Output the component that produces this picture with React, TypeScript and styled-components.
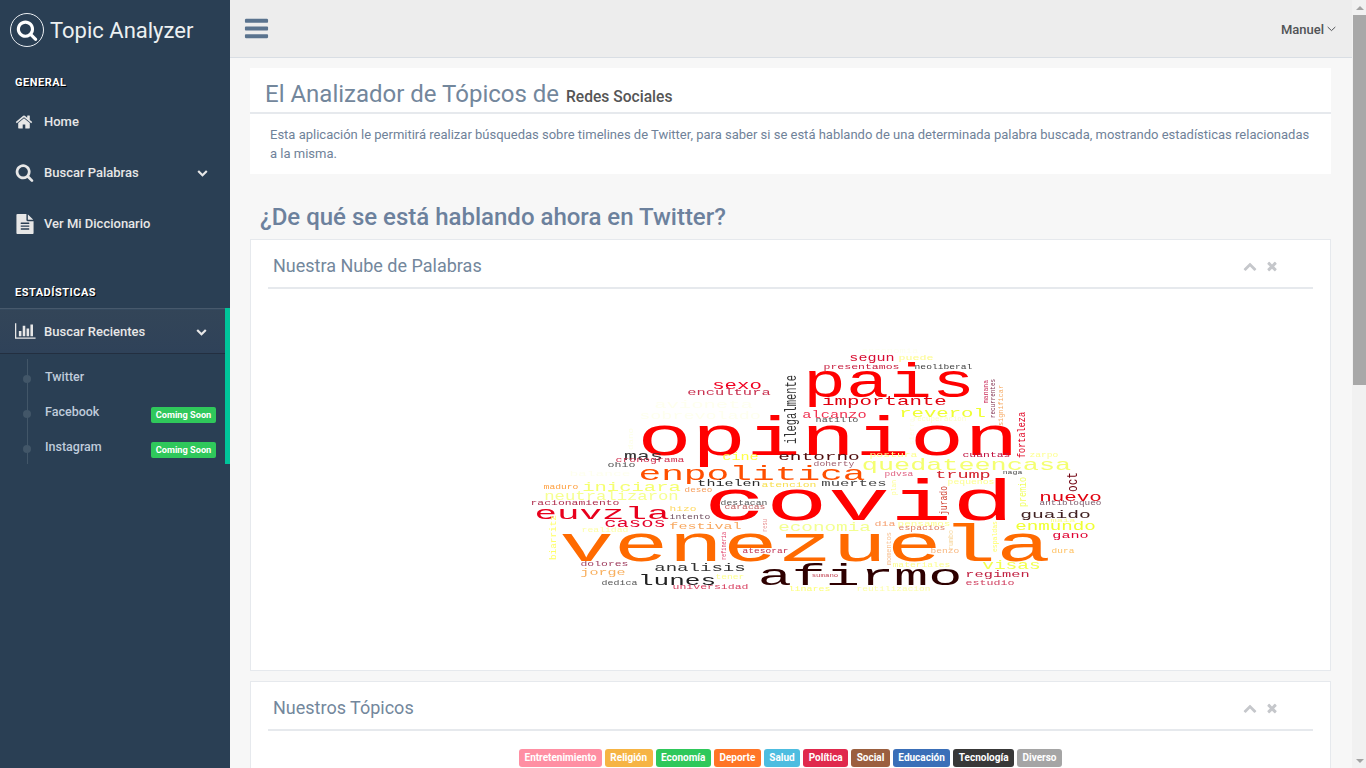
import React from "react";
import styled, { createGlobalStyle } from "styled-components";

const Global = createGlobalStyle`
  html, body { margin: 0; padding: 0; background: #2a3f54; }
  body { font-family: Roboto, "Liberation Sans", sans-serif; font-size: 13px; color: #73879c; }
  * { box-sizing: border-box; }
`;

const Shell = styled.div`
  display: grid;
  grid-template-columns: 230px 1fr 14px;
  min-height: 1530px;
`;
const Sidebar = styled.aside`
  background: #2a3f54;
  display: flex;
  flex-direction: column;
`;
const Brand = styled.div`
  height: 57px;
  display: flex;
  align-items: center;
  gap: 6px;
  padding: 3px 0 0 10px;
  color: #ecf0f1;
  font-size: 22px;
`;
const BrandCircle = styled.span`
  width: 34px;
  height: 34px;
  border-radius: 50%;
  border: 1px solid #eaeef2;
  display: flex;
  align-items: center;
  justify-content: center;
  color: #fff;
`;
const SectionTitle = styled.h3<{ $top: number }>`
  margin: ${(p) => p.$top}px 0 0;
  padding-left: 15px;
  height: 16px;
  line-height: 16px;
  font-size: 11px;
  font-weight: 700;
  letter-spacing: 0.5px;
  color: #fff;
  text-shadow: 1px 1px #000;
`;
const NavList = styled.nav`
  display: flex;
  flex-direction: column;
  margin-top: 5px;
`;
const NavRow = styled.div`
  height: 51px;
  padding: 0 22px 0 15px;
  display: flex;
  align-items: center;
  color: #e7e7e7;
  font-weight: 500;
  font-size: 13px;
`;
const NavIconBox = styled.span`
  width: 29px;
  flex: none;
  display: flex;
  align-items: center;
  color: #e7e7e7;
`;
const NavLabel = styled.span`
  flex: 1;
`;
const ActiveGroup = styled.div`
  margin-top: 7px;
  border-right: 5px solid #00c49a;
  height: 156px;
  display: flex;
  flex-direction: column;
`;
const ActiveRow = styled.div`
  height: 46px;
  flex: none;
  padding: 0 18px 0 15px;
  display: flex;
  align-items: center;
  font-weight: 500;
  color: #e7e7e7;
  background: linear-gradient(#334558, #2f4259);
  border-top: 1px solid #47596c;
  border-bottom: 1px solid #232f40;
  box-shadow: inset 0 1px 0 #34495e;
`;
const SubList = styled.div`
  position: relative;
  flex: 1;
  padding-top: 5px;
  &::before {
    content: "";
    position: absolute;
    left: 27px;
    top: 5px;
    bottom: 0;
    width: 1px;
    background: #425668;
  }
`;
const SubRow = styled.div`
  position: relative;
  height: 35px;
  padding: 0 9px 0 45px;
  display: flex;
  align-items: center;
  justify-content: space-between;
  color: #bfcbdb;
  font-weight: 500;
  font-size: 12.5px;
  &::before {
    content: "";
    position: absolute;
    left: 23px;
    top: 16px;
    width: 8px;
    height: 8px;
    border-radius: 50%;
    background: #425668;
  }
`;
const Soon = styled.span`
  width: 65px;
  height: 16px;
  margin-top: 7px;
  border-radius: 2px;
  background: #2fc85b;
  color: #fff;
  font-size: 9.2px;
  font-weight: 700;
  line-height: 16px;
  text-align: center;
`;

const Main = styled.main`
  background: #f7f7f7;
  min-width: 0;
`;
const TopBar = styled.header`
  height: 58px;
  background: #ededed;
  border-bottom: 1px solid #d9dee4;
  display: flex;
  align-items: center;
  justify-content: space-between;
  padding: 0 16px 0 13px;
  color: #5a738e;
`;
const UserMenu = styled.div`
  display: flex;
  align-items: center;
  gap: 3px;
  color: #515356;
  font-weight: 500;
  font-size: 13px;
  margin-top: 1px;
`;
const Content = styled.div`
  padding: 10px 21px 0 20px;
  display: flex;
  flex-direction: column;
`;
const IntroCard = styled.section`
  background: #fff;
  height: 106px;
`;
const IntroTitle = styled.div`
  height: 46px;
  border-bottom: 2px solid #e6e9ed;
  padding: 8px 15px 0;
  font-size: 24px;
  line-height: 36px;
  color: #73879c;
`;
const IntroSmall = styled.small`
  font-size: 15.6px;
  font-weight: 500;
  color: #555;
  margin-left: 1px;
`;
const IntroText = styled.p`
  margin: 0;
  padding: 11px 20px 0;
  font-size: 13px;
  line-height: 19px;
  color: #6f8299;
`;
const Heading = styled.h2`
  margin: 29px 0 0 10px;
  height: 36px;
  font-size: 24px;
  line-height: 29px;
  font-weight: 500;
  color: #6c819d;
`;
const Panel = styled.section<{ $height?: number }>`
  background: #fff;
  border: 1px solid #e6e9ed;
  padding: 0 17px;
  margin-bottom: 10px;
  height: ${(p) => (p.$height ? `${p.$height}px` : "auto")};
`;
const PanelHead = styled.div`
  height: 49px;
  border-bottom: 2px solid #e6e9ed;
  display: flex;
  align-items: center;
  justify-content: space-between;
  padding: 3px 34px 0 5px;
  font-size: 18px;
  color: #73879c;
`;
const PanelTools = styled.div`
  display: flex;
  align-items: center;
  gap: 8px;
  margin-top: 1px;
  color: #c5c7cb;
`;
const CloudBox = styled.div`
  margin: 0 -17px;
  height: 381px;
`;
const BadgeRow = styled.div`
  display: flex;
  justify-content: center;
  gap: 3px;
  padding-top: 18px;
  height: 762px;
`;
const Badge = styled.span<{ $bg: string }>`
  height: 18px;
  padding: 0 5.5px;
  border-radius: 3px;
  background: ${(p) => p.$bg};
  color: #fff;
  font-size: 10px;
  font-weight: 700;
  line-height: 18px;
`;
const ScrollRail = styled.div`
  position: sticky;
  top: 0;
  height: 100vh;
  background: #f1f1f1;
  padding-left: 1px;
  display: flex;
  flex-direction: column;
`;
const RailArrow = styled.div<{ $down?: boolean }>`
  height: 15px;
  flex: none;
  display: flex;
  align-items: center;
  justify-content: center;
  &::before {
    content: "";
    border-left: 4px solid transparent;
    border-right: 4px solid transparent;
    ${(p) => (p.$down ? "border-top" : "border-bottom")}: 4px solid #a3a3a3;
  }
`;
const RailThumb = styled.div`
  height: 370px;
  flex: none;
  background: #a8a8a8;
`;
const RailSpace = styled.div`
  flex: 1;
`;

const FA = {
  home: "M1472 992v480q0 26-19 45t-45 19h-384v-384h-256v384h-384q-26 0-45-19t-19-45v-480q0-1 .5-3t.5-3l575-474 575 474q1 2 1 6zm223-69l-62 74q-8 9-21 11h-3q-13 0-21-7l-692-577-692 577q-12 8-24 7-13-2-21-11l-62-74q-8-10-7-23.5t11-21.5l719-599q32-26 76-26t76 26l244 204v-195q0-14 9-23t23-9h192q14 0 23 9t9 23v408l219 182q10 8 11 21.5t-7 23.5z",
  search: "M1216 832q0-185-131.500-316.500t-316.500-131.500-316.500 131.500-131.500 316.500 131.500 316.500 316.500 131.500 316.500-131.500 131.500-316.500zm512 832q0 52-38 90t-90 38q-54 0-90-38l-343-342q-179 124-399 124-143 0-273.500-55.500t-225-150-150-225-55.500-273.500 55.500-273.500 150-225 225-150 273.500-55.500 273.500 55.500 225 150 150 225 55.500 273.500q0 220-124 399l343 343q37 37 37 90z",
  file: "M1596 476q14 14 28 36h-472v-472q22 14 36 28zm-476 164h544v1056q0 40-28 68t-68 28h-1344q-40 0-68-28t-28-68v-1600q0-40 28-68t68-28h800v544q0 40 28 68t68 28zm160 736v-64q0-14-9-23t-23-9h-704q-14 0-23 9t-9 23v64q0 14 9 23t23 9h704q14 0 23-9t9-23zm0-256v-64q0-14-9-23t-23-9h-704q-14 0-23 9t-9 23v64q0 14 9 23t23 9h704q14 0 23-9t9-23zm0-256v-64q0-14-9-23t-23-9h-704q-14 0-23 9t-9 23v64q0 14 9 23t23 9h704q14 0 23-9t9-23z",
  bars: "M1664 1344v128q0 26-19 45t-45 19h-1408q-26 0-45-19t-19-45v-128q0-26 19-45t45-19h1408q26 0 45 19t19 45zm0-512v128q0 26-19 45t-45 19h-1408q-26 0-45-19t-19-45v-128q0-26 19-45t45-19h1408q26 0 45 19t19 45zm0-512v128q0 26-19 45t-45 19h-1408q-26 0-45-19t-19-45v-128q0-26 19-45t45-19h1408q26 0 45 19t19 45z",
  chart: "M640 896v512h-256v-512h256zm384-512v1024h-256v-1024h256zm1024 1152v128h-2048v-1536h128v1408h1920zm-640-896v768h-256v-768h256zm384-384v1152h-256v-1152h256z",
  down: "M1683 808l-742 741q-19 19-45 19t-45-19l-742-741q-19-19-19-45.500t19-45.500l166-166q19-19 45-19t45 19l531 531 531-531q19-19 45-19t45 19l166 166q19 19 19 45.500t-19 45.500z",
  up: "M1683 1331l-166 165q-19 19-45 19t-45-19l-531-531-531 531q-19 19-45 19t-45-19l-166-165q-19-19-19-45.500t19-45.500l742-741q19-19 45-19t45 19l742 741q19 19 19 45.500t-19 45.500z",
  close: "M1490 1322q0 40-28 68l-136 136q-28 28-68 28t-68-28l-294-294-294 294q-28 28-68 28t-68-28l-136-136q-28-28-28-68t28-68l294-294-294-294q-28-28-28-68t28-68l136-136q28-28 68-28t68 28l294 294 294-294q28-28 68-28t68 28l136 136q28 28 28 68t-28 68l-294 294 294 294q28 28 28 68z",
};

const Icon = ({ d, size, vw = 1792 }: { d: string; size: number; vw?: number }) => (
  <svg width={(size * vw) / 1792} height={size} viewBox={`0 0 ${vw} 1792`} fill="currentColor">
    <path d={d} />
  </svg>
);
const Angle = () => (
  <svg width="9" height="6" viewBox="0 0 9 6" fill="none" stroke="#515356" strokeWidth="1">
    <path d="M.7 1l3.8 3.6L8.300 1" />
  </svg>
);

// word, x1, x2, baseline, font size, colour
type W = [string, number, number, number, number, string];
const WORDS: W[] = [
  ["enconomia", 862, 918, 353, 7, "#fdfff0"],
  ["segun", 850, 894, 361, 10, "#d81030"],
  ["puede", 899, 933, 360, 8, "#fdfb8c"],
  ["presentamos", 824, 899, 369, 8, "#c82040"],
  ["neoliberal", 915, 972, 369, 8, "#444444"],
  ["pais", 806, 972, 397, 48, "#ff0000"],
  ["importante", 823, 946, 405, 13, "#e00010"],
  ["sexo", 713, 761, 389, 13, "#f00020"],
  ["encultura", 688, 770, 395, 9, "#c8304f"],
  ["avioneta", 655, 752, 408, 10, "#feffee"],
  ["sobrevolado", 640, 760, 419, 10, "#feffee"],
  ["alcanzo", 803, 866, 418, 11, "#f03050"],
  ["reverol", 900, 985, 417, 13, "#f0ff33"],
  ["natillo", 816, 858, 422, 7.5, "#555555"],
  ["recuperacion", 913, 966, 421, 7, "#fdffc8"],
  ["opinion", 641, 1015, 455, 56, "#ff0000"],
  ["mas", 625, 662, 460, 13, "#333333"],
  ["cine", 723, 758, 460, 10, "#ffff44"],
  ["entorno", 779, 859, 460, 11.500, "#501010"],
  ["postura", 870, 917, 457, 7.5, "#fdff90"],
  ["cuantas", 963, 1010, 457, 7.5, "#c0103e"],
  ["zarpo", 1030, 1058, 457, 7.5, "#fdff90"],
  ["cronograma", 616, 684, 462, 8, "#d03050"],
  ["ohio", 608, 635, 467, 7, "#555555"],
  ["doherty", 814, 854, 466, 7, "#a06070"],
  ["quedateencasa", 863, 1070, 470, 17, "#f4ff70"],
  ["enpolitica", 640, 864, 480, 21, "#ff5000"],
  ["balance", 570, 630, 476, 8, "#feffee"],
  ["pdvsa", 885, 913, 476, 7.5, "#e06080"],
  ["naga", 1003, 1022, 474, 6, "#444444"],
  ["trump", 936, 990, 478, 11, "#d2202c"],
  ["pequenos", 948, 994, 484, 7.5, "#fdff90"],
  ["thielen", 698, 760, 486, 9, "#2a2a2a"],
  ["atencion", 762, 816, 487, 8, "#f8e050"],
  ["muertes", 822, 886, 486, 9, "#444444"],
  ["maduro", 544, 578, 489, 7.5, "#ffa040"],
  ["iniciara", 583, 680, 491, 13, "#f5ff70"],
  ["deseo", 685, 712, 492, 7.5, "#f6a060"],
  ["neutralizaron", 545, 678, 500, 13, "#f6ff90"],
  ["nuevo", 1040, 1101, 501, 13, "#e00010"],
  ["racionamiento", 531, 619, 505, 7.5, "#b03050"],
  ["destacan", 721, 767, 505, 7.5, "#555555"],
  ["antibloqueo", 1040, 1101, 505, 7.5, "#806070"],
  ["caracas", 725, 765, 509, 7, "#c06060"],
  ["hizo", 670, 696, 511, 7.5, "#ffd860"],
  ["euvzla", 536, 668, 519, 19, "#e8001e"],
  ["guaido", 1021, 1090, 518, 11, "#402020"],
  ["intento", 670, 710, 519, 7, "#705060"],
  ["covid", 708, 1010, 520, 57, "#ff0000"],
  ["maia", 1051, 1075, 522, 6, "#fdff90"],
  ["casos", 605, 665, 527, 13, "#e5002a"],
  ["dia", 875, 895, 526, 7, "#f6a070"],
  ["pensamos", 898, 950, 526, 8, "#fdff90"],
  ["festival", 670, 741, 529, 9.5, "#f8a860"],
  ["espacios", 899, 945, 530, 7, "#e08060"],
  ["enmundo", 1016, 1095, 530, 12, "#f0ff30"],
  ["realidad", 582, 628, 532, 7.5, "#fdffa8"],
  ["economia", 779, 870, 531, 13, "#f3ff90"],
  ["gano", 1053, 1088, 538, 9, "#e00030"],
  ["benzo", 931, 959, 553, 7, "#f8b880"],
  ["atesorar", 743, 788, 553, 7.5, "#c03050"],
  ["dura", 1052, 1074, 553, 7.5, "#ffc060"],
  ["venezuela", 563, 1047, 561, 52, "#ff6a00"],
  ["materiales", 893, 950, 567, 7.5, "#fdff90"],
  ["dolores", 581, 628, 566, 8, "#a04060"],
  ["analisis", 655, 745, 571, 10.5, "#333333"],
  ["visas", 983, 1040, 569, 13, "#f2ff50"],
  ["jorge", 581, 625, 575, 9.5, "#f8b060"],
  ["tener", 716, 744, 579, 7.5, "#fdff90"],
  ["sumano", 812, 838, 577, 6, "#c04050"],
  ["regimen", 966, 1029, 577, 9.5, "#c02040"],
  ["afirmo", 760, 960, 585, 30, "#2d0005"],
  ["lunes", 639, 715, 585, 14, "#222222"],
  ["dedica", 602, 637, 585, 7.5, "#555555"],
  ["estudio", 966, 1014, 585, 7.5, "#d04060"],
  ["universidad", 673, 748, 589, 8, "#d84060"],
  ["linares", 789, 830, 591, 7.5, "#fdff78"],
  ["reutilizacion", 857, 930, 591, 7.5, "#fdffa8"],
];
// word, baseline x, y1 (top), y2 (bottom), size, colour : read bottom to top
type V = [string, number, number, number, number, string];
const VERTICAL: V[] = [
  ["ilegalmente", 796, 375, 444, 16, "#333333"],
  ["manana", 988, 380, 403, 8, "#c82050"],
  ["recurrentes", 995, 379, 418, 8, "#803050"],
  ["significar", 1003, 385, 426, 8, "#f6a860"],
  ["fortaleza", 1025, 412, 458, 10, "#e00020"],
  ["dano", 633, 428, 450, 7, "#fdffe8"],
  ["sierra", 914, 418, 445, 7, "#fdffe8"],
  ["oct", 1077, 472, 492, 14, "#700010"],
  ["premio", 1026, 477, 507, 10, "#f0ff60"],
  ["plan", 896, 480, 495, 8, "#fdff90"],
  ["jurado", 947, 486, 515, 10, "#d04030"],
  ["biarritz", 556, 515, 560, 9, "#ffff66"],
  ["resu", 767, 519, 532, 7, "#e89090"],
  ["refineria", 726, 532, 560, 7, "#e0406a"],
  ["espaldas", 997, 521, 552, 8, "#ffff66"],
  ["momentos", 891, 532, 565, 7, "#f8c090"],
  ["rumbo", 953, 530, 550, 7, "#f8d8a0"],
];
const mono = '"Liberation Mono", "DejaVu Sans Mono", monospace';
const BEARING = 0.07;

const WordCloud = () => (
  <svg width="1079" height="381" viewBox="251 289 1079 381" style={{ display: "block" }}>
    <defs>
      <filter id="soft" x="-5%" y="-5%" width="110%" height="110%">
        <feGaussianBlur stdDeviation="0.35" />
      </filter>
    </defs>
    <g filter="url(#soft)" fontFamily={mono}>
      {WORDS.map(([t, x1, x2, y, fs, c]) => {
        const pad = ((x2 - x1) / t.length) * BEARING;
        return (
          <text
            key={t}
            x={x1 - pad}
            y={y}
            fontSize={fs}
            fill={c}
            textLength={x2 - x1 + 2 * pad}
            lengthAdjust="spacingAndGlyphs"
          >
            {t}
          </text>
        );
      })}
      {VERTICAL.map(([t, x, y1, y2, fs, c]) => (
        <text
          key={t}
          transform={`translate(${x} ${y2}) rotate(-90)`}
          fontSize={fs}
          fill={c}
          textLength={y2 - y1}
          lengthAdjust="spacingAndGlyphs"
        >
          {t}
        </text>
      ))}
    </g>
  </svg>
);

const TOPICS: [string, string][] = [
  ["Entretenimiento", "#ff8fa3"],
  ["Religión", "#f6b444"],
  ["Economía", "#2fc85b"],
  ["Deporte", "#ff7527"],
  ["Salud", "#4dbde0"],
  ["Política", "#e0294d"],
  ["Social", "#9b5f3f"],
  ["Educación", "#3a6fb8"],
  ["Tecnología", "#383838"],
  ["Diverso", "#a5a5a5"],
];

const PanelTitle = ({ title }: { title: string }) => (
  <PanelHead>
    <span>{title}</span>
    <PanelTools>
      <Icon d={FA.up} size={14} />
      <Icon d={FA.close} size={14} />
    </PanelTools>
  </PanelHead>
);

export default function App() {
  return (
    <>
      <Global />
      <Shell>
        <Sidebar>
          <Brand>
            <BrandCircle>
              <Icon d={FA.search} size={22} />
            </BrandCircle>
            <span>Topic Analyzer</span>
          </Brand>
          <SectionTitle $top={18}>GENERAL</SectionTitle>
          <NavList>
            <NavRow>
              <NavIconBox><Icon d={FA.home} size={18} /></NavIconBox>
              <NavLabel>Home</NavLabel>
            </NavRow>
            <NavRow>
              <NavIconBox><Icon d={FA.search} size={19} /></NavIconBox>
              <NavLabel>Buscar Palabras</NavLabel>
              <Icon d={FA.down} size={11} />
            </NavRow>
            <NavRow>
              <NavIconBox><Icon d={FA.file} size={20} /></NavIconBox>
              <NavLabel>Ver Mi Diccionario</NavLabel>
            </NavRow>
          </NavList>
          <SectionTitle $top={36}>ESTADÍSTICAS</SectionTitle>
          <ActiveGroup>
            <ActiveRow>
              <NavIconBox><Icon d={FA.chart} size={18} vw={2048} /></NavIconBox>
              <NavLabel>Buscar Recientes</NavLabel>
              <Icon d={FA.down} size={11} />
            </ActiveRow>
            <SubList>
              <SubRow>Twitter</SubRow>
              <SubRow>Facebook<Soon>Coming Soon</Soon></SubRow>
              <SubRow>Instagram<Soon>Coming Soon</Soon></SubRow>
            </SubList>
          </ActiveGroup>
        </Sidebar>
        <Main>
          <TopBar>
            <Icon d={FA.bars} size={27} />
            <UserMenu>Manuel <Angle /></UserMenu>
          </TopBar>
          <Content>
            <IntroCard>
              <IntroTitle>
                El Analizador de Tópicos de <IntroSmall>Redes Sociales</IntroSmall>
              </IntroTitle>
              <IntroText>
                Esta aplicación le permitirá realizar búsquedas sobre timelines de Twitter, para saber si se está hablando de una determinada palabra buscada, mostrando estadísticas relacionadas a la misma.
              </IntroText>
            </IntroCard>
            <Heading>¿De qué se está hablando ahora en Twitter?</Heading>
            <Panel $height={432}>
              <PanelTitle title="Nuestra Nube de Palabras" />
              <CloudBox><WordCloud /></CloudBox>
            </Panel>
            <Panel>
              <PanelTitle title="Nuestros Tópicos" />
              <BadgeRow>
                {TOPICS.map(([t, c]) => (
                  <Badge key={t} $bg={c}>{t}</Badge>
                ))}
              </BadgeRow>
            </Panel>
          </Content>
        </Main>
        <ScrollRail>
          <RailArrow />
          <RailThumb />
          <RailSpace />
          <RailArrow $down />
        </ScrollRail>
      </Shell>
    </>
  );
}
